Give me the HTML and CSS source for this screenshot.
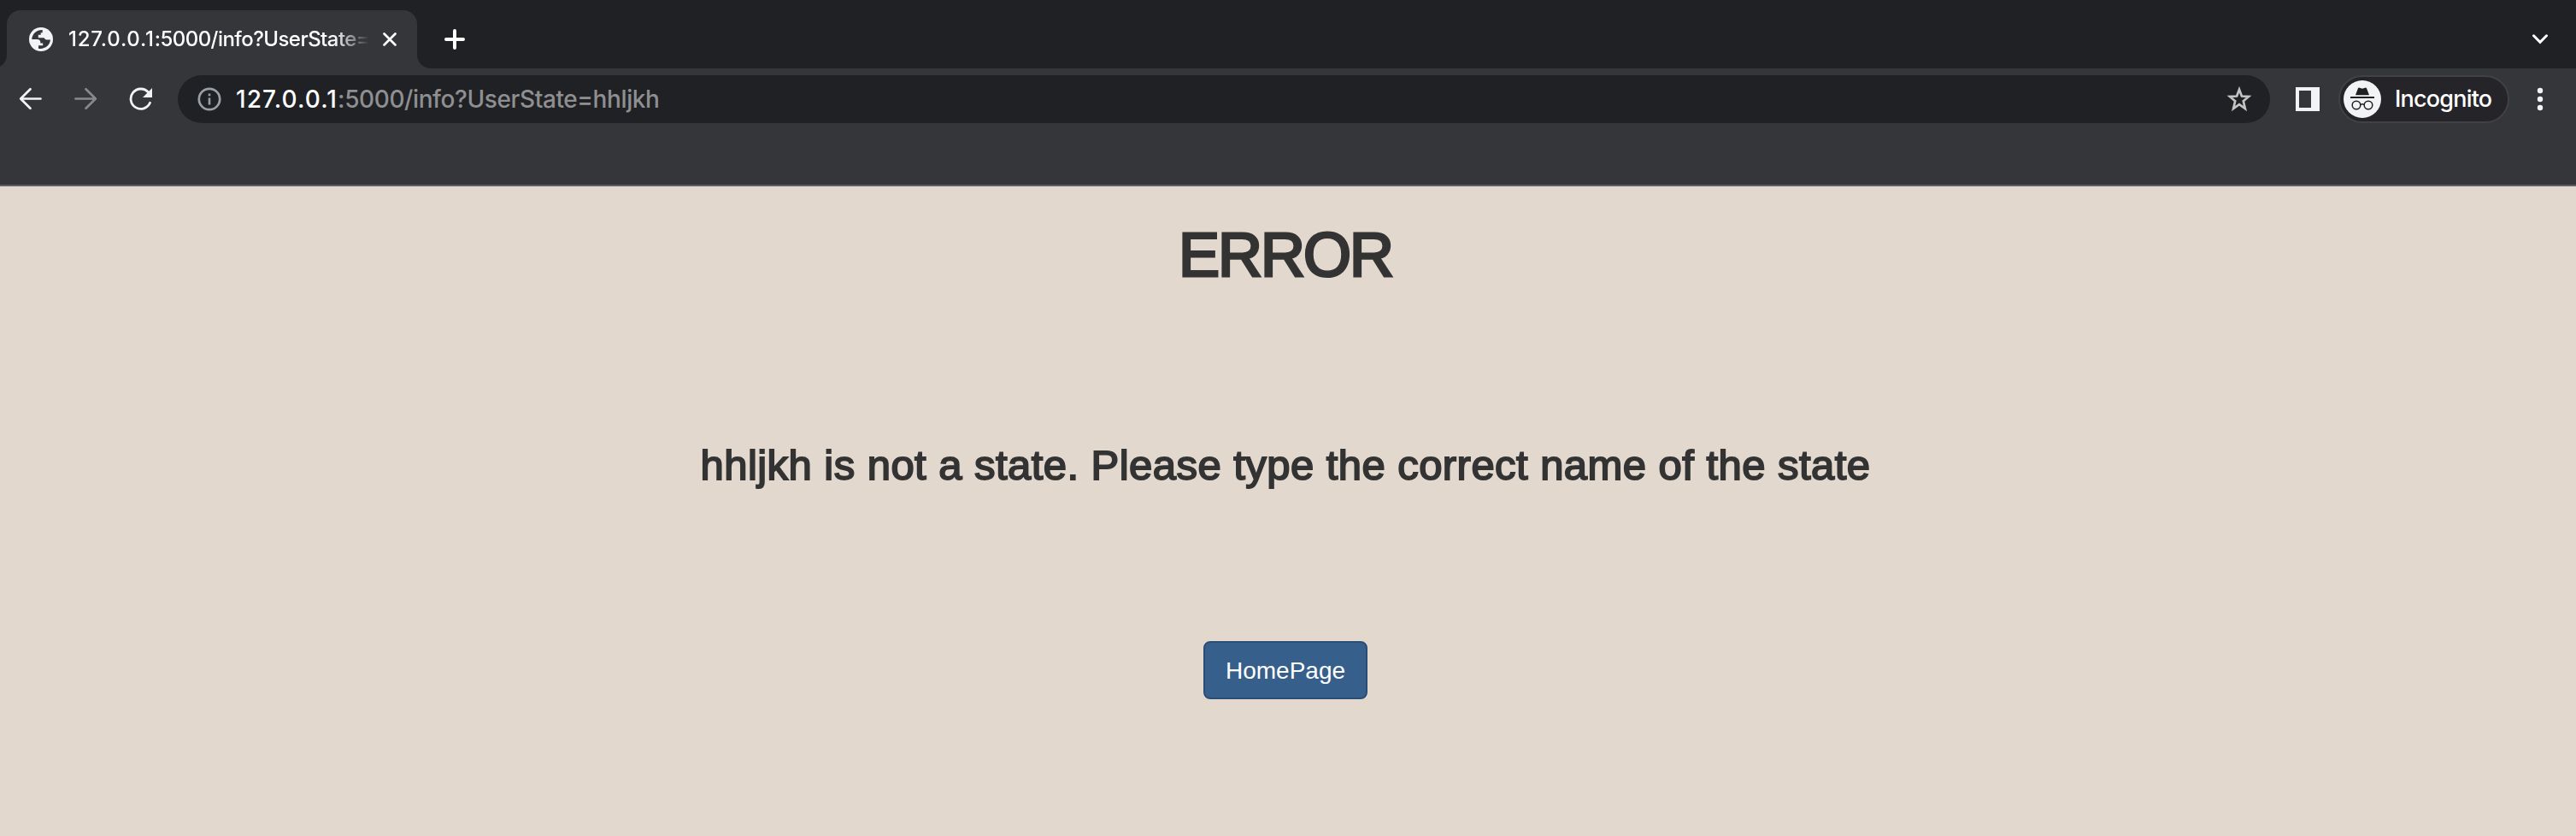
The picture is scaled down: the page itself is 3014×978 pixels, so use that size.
FILE: index.html
```html
<!DOCTYPE html>
<html lang="en">
<head>
<meta charset="utf-8">
<title>127.0.0.1:5000/info?UserState=hhljkh</title>
<link rel="stylesheet" href="styles.css">
</head>
<body>
<header class="browser">
  <div class="tabstrip">
    <div class="tab">
      <svg class="globe" width="28" height="28" viewBox="0 0 28 28"><circle cx="14" cy="14" r="14" fill="#f1f3f4"/><path d="M15.700 3C9 2.800 3.900 7.200 3.200 14H9.500C12 14 13.300 15.300 13.300 17.200V18.600H16.200V21.200H11V24.700C18 25.900 24.400 21.300 24.900 14.500H21.500C19.500 14.500 18.200 13.700 17.700 12.200H10.800V8.800H13.700V6.300H15.700Z" fill="#35363a"/></svg>
      <span class="tab-title"><span class="tab-host">127.0.0.1</span>:5000/info?UserState=</span>
      <svg class="close" width="18" height="18" viewBox="0 0 18 18"><path d="M2.500 2.500L15.500 15.500M15.500 2.500L2.500 15.500" stroke="#fff" stroke-width="2.7" stroke-linecap="round"/></svg>
    </div>
    <svg class="new-tab" width="24" height="24" viewBox="0 0 24 24"><path d="M12 2V22M2 12H22" stroke="#fff" stroke-width="4" stroke-linecap="round"/></svg>
    <svg class="chevron" width="18" height="12" viewBox="0 0 18 12"><path d="M1.500 1.800L9 9.300L16.500 1.800" fill="none" stroke="#fff" stroke-width="3" stroke-linecap="round"/></svg>
  </div>
  <div class="toolbar">
    <svg class="back" width="28" height="28" viewBox="0 0 28 28"><path d="M25.500 13.500H3M13.500 2.200L2.200 13.500L13.500 24.800" fill="none" stroke="#f1f3f4" stroke-width="2.700" stroke-linecap="round" stroke-linejoin="round"/></svg>
    <svg class="forward" width="28" height="28" viewBox="0 0 28 28"><path d="M2.500 13.500H25M14.500 2.200L25.800 13.500L14.500 24.800" fill="none" stroke="#88898b" stroke-width="2.700" stroke-linecap="round" stroke-linejoin="round"/></svg>
    <svg class="reload" width="28" height="28" viewBox="0 0 28 28"><path d="M24.500 18.300A11.700 11.700 0 1 1 22.400 5.800" fill="none" stroke="#f1f3f4" stroke-width="2.800" stroke-linecap="round"/><path d="M27 1V12H16Z" fill="#f1f3f4"/></svg>
    <div class="omnibox">
      <svg class="info" width="28" height="28" viewBox="0 0 28 28"><circle cx="14" cy="14" r="12.200" fill="none" stroke="#9aa0a6" stroke-width="2.700"/><path d="M12.700 12.500H15.300V20.500H12.700ZM12.700 7.500H15.300V10.200H12.700Z" fill="#9aa0a6"/></svg>
      <span class="url"><span class="host">127.0.0.1</span><span class="path">:5000/info?UserState=hhljkh</span></span>
      <svg class="star" width="30" height="30" viewBox="0 0 30 30"><path d="M15 3.700L17.900 11.500L26 12L19.800 17.200L21.900 26L15 21.200L8.100 26L10.200 17.200L4 12L12.100 11.500Z" fill="none" stroke="#c4c4c5" stroke-width="2.700"/></svg>
    </div>
    <svg class="panel" width="28" height="28" viewBox="0 0 28 28"><path fill-rule="evenodd" d="M0 0H28V28H0ZM4 4V24H18V4Z" fill="#f1f3f4"/></svg>
    <div class="incognito">
      <svg width="44" height="44" viewBox="0 0 44 44"><circle cx="22" cy="22" r="22" fill="#f1f3f4"/><path d="M14 17.300L17 9.300Q17.500 8.200 18.800 8.700L22 9.700L25.200 8.700Q26.500 8.200 27 9.300L30 17.300ZM8 19H36V21H8Z" fill="#202124"/><g fill="none" stroke="#202124" stroke-width="1.500"><circle cx="15" cy="29" r="4.800"/><circle cx="29" cy="29" r="4.800"/><path d="M19.800 28.500Q22 27 24.200 28.500"/></g></svg>
      <span>Incognito</span>
    </div>
    <svg class="menu" width="8" height="28" viewBox="0 0 8 28"><g fill="#f1f3f4"><circle cx="4" cy="4" r="3.200"/><circle cx="4" cy="14" r="3.200"/><circle cx="4" cy="24" r="3.200"/></g></svg>
  </div>
</header>
<main class="page">
  <h1>ERROR</h1>
  <h2>hhljkh is not a state. Please type the correct name of the state</h2>
  <a class="btn">HomePage</a>
</main>
</body>
</html>
```
FILE: styles.css
```css
* { box-sizing: border-box; }
html, body { margin: 0; height: 978px; overflow: hidden; }
body { display: flex; flex-direction: column; background: #e3d8ce; }
svg { display: block; flex: none; }
.browser {
  flex: none; height: 218px; background: #35363a;
  border-bottom: 2px solid #5f6067;
  font-family: Inter, Roboto, sans-serif; font-weight: 500; color: #fff;
}
.tabstrip { display: flex; height: 80px; padding: 12px 32px 0 8px; background: #202124; }
.tab {
  position: relative; display: flex; align-items: center;
  width: 480px; height: 68px; padding: 0 23px 0 26px;
  background: #35363a; border-radius: 16px 16px 0 0;
}
.tab::before, .tab::after {
  content: ""; position: absolute; bottom: 0; width: 16px; height: 16px;
}
.tab::before { left: -16px; background: radial-gradient(circle at 0 0, #202124 15.5px, #35363a 16.5px); }
.tab::after { right: -16px; background: radial-gradient(circle at 100% 0, #202124 15.5px, #35363a 16.5px); }
.tab-title {
  width: 352px; margin-left: 18px; white-space: nowrap;
  font-size: 24px; line-height: 34px; letter-spacing: -0.55px;
  -webkit-mask-image: linear-gradient(90deg, #000 310px, transparent 352px);
  mask-image: linear-gradient(90deg, #000 310px, transparent 352px);
}
.tab-host { letter-spacing: 0.8px; }
.close { margin-left: 15px; }
.new-tab { margin: 22px 0 0 32px; }
.chevron { margin: 28px 1px 0 auto; }
.toolbar { display: flex; align-items: center; height: 72px; padding: 0 38px 0 22px; }
.forward { margin-left: 36px; }
.reload { margin-left: 37px; }
.omnibox {
  display: flex; align-items: center; width: 2448px; height: 56px;
  margin-left: 29px; padding: 0 21px 0 23px; border-radius: 28px; background: #202124;
}
.url { margin-left: 17px; font-size: 28px; line-height: 40px; white-space: nowrap; }
.host { letter-spacing: 1.1px; }
.path { color: #8f8f91; letter-spacing: -0.4px; }
.star { margin-left: auto; }
.panel { margin-left: 30px; }
.incognito {
  display: flex; align-items: center; width: 200px; height: 56px; margin-left: 22px;
  padding-left: 4px; border: 2px solid #414146; border-radius: 28px; background: #252428;
}
.incognito span { margin-left: 16px; font-size: 27px; line-height: 40px; letter-spacing: -0.8px; }
.menu { margin-left: auto; }
.page {
  display: flex; flex-direction: column; align-items: center;
  width: 3008px; font-family: "Liberation Sans", Arial, sans-serif; color: #333;
}
h1, h2 { margin: 0; font-weight: 400; white-space: nowrap; }
h1 { margin-top: 40px; font-size: 72px; line-height: 80px; letter-spacing: -2px; -webkit-text-stroke: 3px #333; }
h2 { margin-top: 179px; font-size: 49px; line-height: 54px; letter-spacing: 0.45px; -webkit-text-stroke: 1.9px #333; }
.btn {
  display: flex; align-items: center; justify-content: center;
  width: 192px; height: 68px; margin-top: 179px; padding-top: 1px;
  border: 2px solid #2a4d75; border-radius: 8px; background: #375f8b;
  color: #fff; font-size: 28px; line-height: 40px;
}
```
